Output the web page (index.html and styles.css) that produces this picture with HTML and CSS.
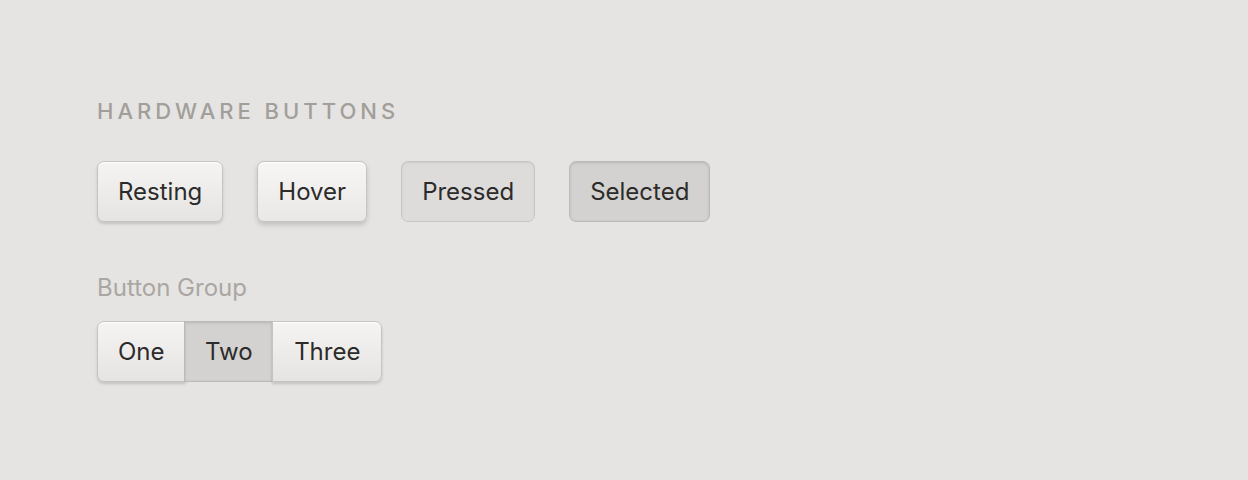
FILE: index.html
```html
<!DOCTYPE html>
<html lang="en">
<head>
<meta charset="UTF-8">
<meta name="viewport" content="width=device-width, initial-scale=1.0">
<title>Hardware Buttons</title>
<link rel="stylesheet" href="styles.css">
</head>
<body>
  <div class="panel">
    <h2 class="section-title">Hardware Buttons</h2>

    <div class="button-row">
      <button class="hw-btn">Resting</button>
      <button class="hw-btn hover">Hover</button>
      <button class="hw-btn pressed">Pressed</button>
      <button class="hw-btn selected">Selected</button>
    </div>

    <div class="group-label">Button Group</div>
    <div class="btn-group">
      <button class="hw-btn">One</button>
      <button class="hw-btn selected">Two</button>
      <button class="hw-btn">Three</button>
    </div>
  </div>
</body>
</html>
```

FILE: styles.css
```css
body {
  font-family: Inter, "Noto Sans", sans-serif;
  background-color: #e5e4e2;
  margin: 0;
  padding: 0;
}

.panel {
  padding: 98px 97px;
}

.section-title {
  margin: 0 0 37px;
  font-size: 22px;
  font-weight: 500;
  letter-spacing: 4px;
  text-transform: uppercase;
  color: #a29e9a;
  line-height: 26px;
}

.button-row {
  display: flex;
  gap: 34px;
  margin-bottom: 52px;
}

.hw-btn {
  font-family: inherit;
  font-size: 24px;
  color: #2c2b2a;
  padding: 0 20px;
  height: 61px;
  border: 1.5px solid #c6c4c2;
  border-radius: 7px;
  background: linear-gradient(#f5f4f3, #e5e4e3);
  box-shadow: 0 2px 3px rgba(0, 0, 0, 0.15), inset 0 1px 0 rgba(255, 255, 255, 0.8);
  cursor: pointer;
}

.hw-btn.hover {
  background: linear-gradient(#f7f6f5, #e9e8e7);
  box-shadow: 0 3px 5px rgba(0, 0, 0, 0.16), inset 0 1px 0 rgba(255, 255, 255, 0.9);
}

.hw-btn.pressed {
  background: #dddcdb;
  border-color: #c8c6c4;
  box-shadow: inset 0 1px 2px rgba(0, 0, 0, 0.08);
}

.hw-btn.selected {
  background: #d3d2d0;
  border-color: #bcbab8;
  box-shadow: inset 0 1px 3px rgba(0, 0, 0, 0.12);
}

.group-label {
  font-size: 24px;
  color: #aaa6a2;
  line-height: 28px;
  margin-bottom: 19px;
}

.btn-group {
  display: flex;
}

.btn-group .hw-btn {
  border-radius: 0;
  padding: 0 20px;
}

.btn-group .hw-btn:first-child {
  border-radius: 7px 0 0 7px;
}

.btn-group .hw-btn:last-child {
  border-radius: 0 7px 7px 0;
  padding: 0 21px;
}

.btn-group .hw-btn + .hw-btn {
  margin-left: -1.5px;
}
```
